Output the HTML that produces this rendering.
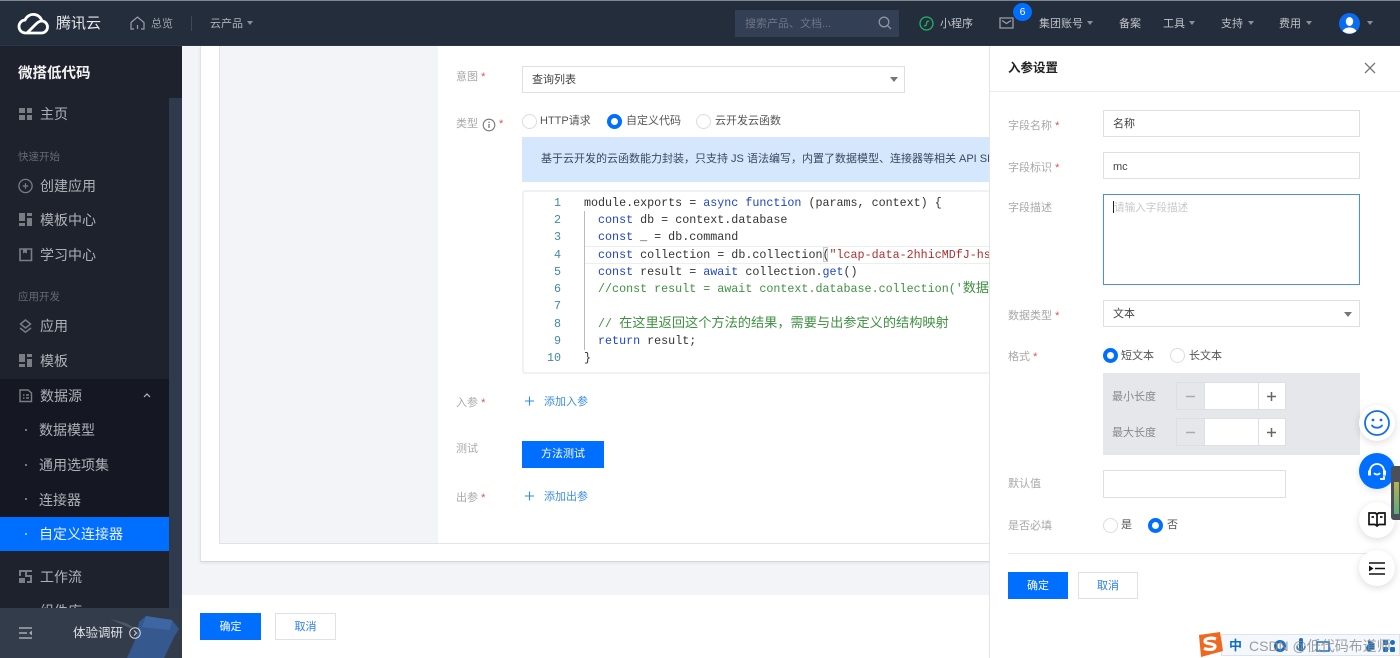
<!DOCTYPE html>
<html lang="zh"><head><meta charset="utf-8"><title>微搭低代码</title>
<style>
html,body{margin:0;padding:0;width:1400px;height:658px;overflow:hidden;background:#fff}
body{position:relative;font-family:"Liberation Sans","Noto Sans CJK SC",sans-serif;font-size:12px;color:#444}
.a,.t,.b{position:absolute}
.t{white-space:nowrap;line-height:16px}
.b{box-sizing:border-box}
svg{position:absolute;overflow:visible}
.n{color:#c0c3c8;font-size:11px}
.m{color:#aeb1b6;font-size:14px;line-height:20px}
.g{color:#656a72;font-size:10.5px}
.l{color:#a8a8a8;font-size:11px}
.l i,.r{color:#e25050;font-style:normal}
.inp{border:1px solid #dcdfe3;background:#fff}
.rad{box-sizing:border-box;position:absolute;width:15px;height:15px;border-radius:50%;border:1px solid #dcdcdc;background:#fff}
.on{border:4px solid #006eff}
.code,.ln{font:11.7px/17.3px "Liberation Mono","Noto Sans CJK SC",monospace;white-space:pre;position:absolute}
.code{left:584px;color:#333}
.ln{width:40px;left:521px;text-align:right;color:#3f8a9e}
.row{position:absolute;left:584px;width:406px;height:17px;overflow:hidden}
.k{color:#1f45c8}.c{color:#3f9142}.s{color:#b03030}
.cj{font-size:13.2px;line-height:0}
.fab{position:absolute;left:1359px;width:36px;height:36px;border-radius:50%;background:#fff;box-shadow:0 2px 8px rgba(0,0,0,.14)}
</style></head><body>

<!-- main background -->
<div class="a" style="left:182px;top:46px;width:1218px;height:549px;background:#f3f4f7"></div>
<div class="a" style="left:182px;top:595px;width:810px;height:63px;background:#fff"></div>
<!-- card -->
<div class="b" style="left:200px;top:46px;width:795px;height:516px;background:#fff;border-left:1px solid #dfe1e5;border-bottom:1px solid #d4d6da;box-shadow:0 1px 3px rgba(0,0,0,.08)"></div>
<div class="b" style="left:219px;top:46px;width:219px;height:498px;background:#f3f4f7;border-left:1px solid #dfe1e5;border-bottom:1px solid #dfe1e5"></div>
<div class="a" style="left:438px;top:543px;width:552px;height:1px;background:#e5e6e9"></div>

<!-- form -->
<div class="t l" style="left:456px;top:69px">意图 <i>*</i></div>
<div class="b inp" style="left:522px;top:66px;width:383px;height:27px"></div>
<div class="t" style="left:532px;top:72px;font-size:11px;color:#444">查询列表</div>
<div class="a" style="left:890px;top:77px;border:4px solid transparent;border-top:5px solid #777"></div>

<div class="t l" style="left:456px;top:116px">类型</div>
<svg style="left:482px;top:118px" width="14" height="14" viewBox="0 0 14 14"><circle cx="7" cy="7" r="5.8" fill="none" stroke="#777" stroke-width="1.1"/><path d="M7 6v4M7 3.8v1.2" stroke="#777" stroke-width="1.3"/></svg>
<div class="t r" style="left:499px;top:116px;font-size:11px">*</div>
<div class="rad" style="left:522px;top:114px"></div>
<div class="t" style="left:540px;top:113px;font-size:11px;color:#555">HTTP请求</div>
<div class="rad on" style="left:607px;top:114px"></div>
<div class="t" style="left:626px;top:113px;font-size:11px;color:#555">自定义代码</div>
<div class="rad" style="left:696px;top:114px"></div>
<div class="t" style="left:715px;top:113px;font-size:11px;color:#555">云开发云函数</div>

<div class="a" style="left:522px;top:137px;width:468px;height:45px;background:#d5e7fd"></div>
<div class="a" style="left:541px;top:151px;width:449px;height:16px;overflow:hidden;white-space:nowrap;font-size:11px;line-height:16px;color:#3a4a5e">基于云开发的云函数能力封装，只支持 JS 语法编写，内置了数据模型、连接器等相关 API SDK</div>

<div class="b" style="left:522px;top:190px;width:468px;height:184px;background:#fff;border:2px solid #f0f1f3;border-right:0;border-radius:3px"></div>
<div class="a" style="left:584px;top:246px;width:406px;height:16px;border-top:1px solid #eee;border-bottom:1px solid #eee"></div>
<div class="a" style="left:584px;top:211px;width:1px;height:139px;background:#bbb"></div>
<div class="a" style="left:823px;top:247px;width:5px;height:15px;border:1px solid #ccc;box-sizing:border-box;background:#f5f5f5"></div>
<div class="ln" style="top:194.700px">1
2
3
4
5
6
7
8
9
10</div>
<div class="code" style="top:194.700px;width:406px;overflow:hidden">module.exports = <span class="k">async</span> <span class="k">function</span> (params, context) {
  <span class="k">const</span> db = context.database
  <span class="k">const</span> _ = db.command
  <span class="k">const</span> collection = db.collection(<span class="s">"lcap-data-2hhicMDfJ-hs</span>
  <span class="k">const</span> result = <span class="k">await</span> collection.<span class="k">get</span>()
  <span class="c">//const result = await context.database.collection('<span class="cj">数据</span></span>

  <span class="c">// <span class="cj">在这里返回这个方法的结果，需要与出参定义的结构映射</span></span>
  <span class="k">return</span> result;
}</div>

<div class="t l" style="left:456px;top:395px">入参 <i>*</i></div>
<svg style="left:525px;top:396px" width="10" height="10" viewBox="0 0 10 10"><path d="M0 5h9M4.500 .5v9" stroke="#2b8fe6" stroke-width="1.100"/></svg>
<div class="t" style="left:544px;top:394px;font-size:11px;color:#3d8de0">添加入参</div>
<div class="t l" style="left:456px;top:441px">测试</div>
<div class="a" style="left:522px;top:441px;width:82px;height:27px;background:#006eff;color:#fff;font-size:11px;line-height:27px;text-align:center">方法测试</div>
<div class="t l" style="left:456px;top:490px">出参 <i>*</i></div>
<svg style="left:525px;top:491px" width="10" height="10" viewBox="0 0 10 10"><path d="M0 5h9M4.500 .5v9" stroke="#2b8fe6" stroke-width="1.100"/></svg>
<div class="t" style="left:544px;top:489px;font-size:11px;color:#3d8de0">添加出参</div>

<!-- footer -->
<div class="a" style="left:200px;top:613px;width:61px;height:27px;background:#006eff;color:#fff;font-size:11px;line-height:29px;text-align:center">确定</div>
<div class="b" style="left:275px;top:613px;width:61px;height:27px;background:#fff;border:1px solid #dfe1e4;color:#2f7de8;font-size:11px;line-height:27px;text-align:center">取消</div>

<!-- drawer -->
<div class="b" style="left:989px;top:46px;width:411px;height:612px;background:#fff;border-left:1px solid #e4e5e8"></div>
<div class="a" style="left:990px;top:91px;width:410px;height:1px;background:#eceded"></div>
<div class="t" style="left:1008px;top:60px;font-size:12.5px;font-weight:700;color:#222">入参设置</div>
<svg style="left:1364px;top:62px" width="12" height="12" viewBox="0 0 12 12"><path d="M1 1l10 10M11 1L1 11" stroke="#777" stroke-width="1.3"/></svg>

<div class="t l" style="left:1008px;top:118px">字段名称 <i>*</i></div>
<div class="b inp" style="left:1103px;top:110px;width:257px;height:27px"></div>
<div class="t" style="left:1113px;top:116px;font-size:11px">名称</div>
<div class="t l" style="left:1008px;top:160px">字段标识 <i>*</i></div>
<div class="b inp" style="left:1103px;top:152px;width:257px;height:27px"></div>
<div class="t" style="left:1113px;top:159px;font-size:11px">mc</div>
<div class="t l" style="left:1008px;top:200px">字段描述</div>
<div class="b" style="left:1103px;top:194px;width:257px;height:91px;border:1px solid #4a90dd;background:#fff"></div>
<div class="a" style="left:1113px;top:201px;width:1px;height:12px;background:#222"></div>
<div class="t" style="left:1114px;top:200px;font-size:10.6px;color:#c8c8c8">请输入字段描述</div>
<div class="t l" style="left:1008px;top:308px">数据类型 <i>*</i></div>
<div class="b inp" style="left:1103px;top:300px;width:257px;height:27px"></div>
<div class="t" style="left:1113px;top:306px;font-size:11px">文本</div>
<div class="a" style="left:1344px;top:312px;border:4px solid transparent;border-top:5px solid #777"></div>
<div class="t l" style="left:1008px;top:349px">格式 <i>*</i></div>
<div class="rad on" style="left:1103px;top:348px"></div>
<div class="t" style="left:1121px;top:348px;font-size:11px;color:#555">短文本</div>
<div class="rad" style="left:1170px;top:348px"></div>
<div class="t" style="left:1189px;top:348px;font-size:11px;color:#555">长文本</div>

<div class="a" style="left:1103px;top:373px;width:257px;height:82px;background:#e5e7eb"></div>
<div class="t" style="left:1112px;top:389px;font-size:11px;color:#888">最小长度</div>
<div class="t" style="left:1112px;top:425px;font-size:11px;color:#888">最大长度</div>
<div class="b" style="left:1176px;top:382px;width:110px;height:28px;border:1px solid #dcdfe3;background:#fff"></div>
<div class="a" style="left:1177px;top:383px;width:27px;height:26px;background:#e5e7eb;border-right:1px solid #dcdfe3"></div>
<svg style="left:1185px;top:391px" width="11" height="11" viewBox="0 0 11 11"><path d="M1 5.500h9" stroke="#aaa" stroke-width="1.500"/></svg>
<div class="a" style="left:1258px;top:383px;width:27px;height:26px;border-left:1px solid #dcdfe3"></div>
<svg style="left:1266px;top:391px" width="11" height="11" viewBox="0 0 11 11"><path d="M1 5.500h9M5.500 1v9" stroke="#666" stroke-width="1.500"/></svg>
<div class="b" style="left:1176px;top:418px;width:110px;height:28px;border:1px solid #dcdfe3;background:#fff"></div>
<div class="a" style="left:1177px;top:419px;width:27px;height:26px;background:#e5e7eb;border-right:1px solid #dcdfe3"></div>
<svg style="left:1185px;top:427px" width="11" height="11" viewBox="0 0 11 11"><path d="M1 5.500h9" stroke="#aaa" stroke-width="1.500"/></svg>
<div class="a" style="left:1258px;top:419px;width:27px;height:26px;border-left:1px solid #dcdfe3"></div>
<svg style="left:1266px;top:427px" width="11" height="11" viewBox="0 0 11 11"><path d="M1 5.500h9M5.500 1v9" stroke="#666" stroke-width="1.500"/></svg>

<div class="t l" style="left:1008px;top:476px">默认值</div>
<div class="b inp" style="left:1103px;top:470px;width:183px;height:28px"></div>
<div class="t l" style="left:1008px;top:518px">是否必填</div>
<div class="rad" style="left:1103px;top:518px"></div>
<div class="t" style="left:1121px;top:517px;font-size:11px;color:#555">是</div>
<div class="rad on" style="left:1148px;top:518px"></div>
<div class="t" style="left:1167px;top:517px;font-size:11px;color:#555">否</div>
<div class="a" style="left:1008px;top:553px;width:370px;height:1px;background:#e9eaec"></div>
<div class="a" style="left:1008px;top:572px;width:60px;height:27px;background:#006eff;color:#fff;font-size:11px;line-height:29px;text-align:center">确定</div>
<div class="b" style="left:1078px;top:572px;width:60px;height:27px;background:#fff;border:1px solid #dfe1e4;color:#2f7de8;font-size:11px;line-height:27px;text-align:center">取消</div>

<!-- sidebar -->
<div class="a" style="left:0;top:46px;width:182px;height:612px;background:#1e222d"></div>
<div class="a" style="left:169px;top:98px;width:13px;height:510px;background:#2f3b4d"></div>
<div class="a" style="left:0;top:379px;width:169px;height:172px;background:#151823"></div>
<div class="t" style="left:18px;top:64px;font-size:14.5px;line-height:20px;font-weight:700;color:#f2f2f2">微搭低代码</div>

<svg style="left:19px;top:107px" width="14" height="14" viewBox="0 0 14 14" fill="#7a7d83"><path d="M0 1h6v5H0zM8 1h5v5H8zM0 8h6v5H0zM8 8h5v5H8z"/></svg>
<div class="t m" style="left:40px;top:104px">主页</div>
<div class="t g" style="left:18px;top:149px">快速开始</div>
<svg style="left:18px;top:178px" width="16" height="16" viewBox="0 0 16 16" fill="none" stroke="#7a7d83" stroke-width="1.3"><circle cx="7.5" cy="8" r="6.6"/><path d="M4.8 8h5.4M7.5 5.3v5.4"/></svg>
<div class="t m" style="left:40px;top:176px">创建应用</div>
<svg style="left:19px;top:213px" width="14" height="14" viewBox="0 0 14 14" fill="#7a7d83"><path d="M0 0h6v8H0zM8 0h5v3H8zM8 5h5v8H8zM0 10h6v3H0z"/></svg>
<div class="t m" style="left:40px;top:210px">模板中心</div>
<svg style="left:19px;top:248px" width="14" height="14" viewBox="0 0 14 14" fill="none" stroke="#7a7d83" stroke-width="1.6"><path d="M1 1h11.500v11.500H1z"/><path d="M4 1h4v4.500L6 4.500 4 5.500z" fill="#7a7d83" stroke="none"/></svg>
<div class="t m" style="left:40px;top:245px">学习中心</div>
<div class="t g" style="left:18px;top:289px">应用开发</div>
<svg style="left:18px;top:318px" width="16" height="16" viewBox="0 0 16 16" fill="none" stroke="#7a7d83" stroke-width="1.5"><path d="M7.500 2l5 4-5 4-5-4zM2 10l5.500 4.200L13 10"/></svg>
<div class="t m" style="left:40px;top:316px">应用</div>
<svg style="left:19px;top:354px" width="14" height="14" viewBox="0 0 14 14" fill="#7a7d83"><path d="M0 0h6v8H0zM8 0h5v3H8zM8 5h5v8H8zM0 10h6v3H0z"/></svg>
<div class="t m" style="left:40px;top:351px">模板</div>
<svg style="left:19px;top:389px" width="14" height="14" viewBox="0 0 14 14" fill="none" stroke="#7a7d83" stroke-width="1.4"><path d="M1 1h8l3.500 3v8.500H1zM4 6h1.500M7 6h3M4 9h1.500M7 9h3"/></svg>
<div class="t m" style="left:40px;top:386px">数据源</div>
<svg style="left:143px;top:393px" width="8" height="5" viewBox="0 0 8 5"><path d="M1 4l3-3 3 3" stroke="#bbb" fill="none" stroke-width="1.2"/></svg>
<div class="a" style="left:25px;top:429px;width:2px;height:2px;background:#777"></div>
<div class="t m" style="left:39px;top:420px">数据模型</div>
<div class="a" style="left:25px;top:464px;width:2px;height:2px;background:#777"></div>
<div class="t m" style="left:39px;top:455px">通用选项集</div>
<div class="a" style="left:25px;top:498px;width:2px;height:2px;background:#777"></div>
<div class="t m" style="left:39px;top:490px">连接器</div>
<div class="a" style="left:0;top:517px;width:169px;height:34px;background:#006eff"></div>
<div class="a" style="left:25px;top:533px;width:2px;height:2px;background:#8dbbff"></div>
<div class="t" style="left:39px;top:524px;font-size:14px;line-height:20px;color:#e8f1ff">自定义连接器</div>
<svg style="left:19px;top:570px" width="14" height="14" viewBox="0 0 14 14" fill="#7a7d83"><path d="M0 0h13v2H8v3h5v8H8v-2h3V7H6V2H2v4H0zM0 8h6v5H0z"/></svg>
<div class="t m" style="left:40px;top:567px">工作流</div>
<div class="t m" style="left:40px;top:601px">组件库</div>

<div class="a" style="left:0;top:608px;width:182px;height:50px;background:#323c4b"></div>
<svg style="left:19px;top:627px" width="14" height="13" viewBox="0 0 14 13"><path d="M0 1h13M0 6h8M0 11h13" stroke="#a5a9af" stroke-width="1.500"/><path d="M13 3.500v5L10 6z" fill="#a5a9af"/></svg>
<svg style="left:110px;top:615px" width="72" height="43" viewBox="0 0 72 43"><path d="M0 4l16 4 7 4-3 1z" fill="#4e5763"/><path d="M36 1l26 4 7 9-5 8-10 21H17l9-20 3-16z" fill="#35598f"/><path d="M36 1l26 4-2 10-28-3z" fill="#3d66a3"/></svg>
<div class="t" style="left:73px;top:624px;font-size:12.500px;line-height:18px;color:#e0e3e7">体验调研</div>
<svg style="left:129px;top:627px" width="12" height="12" viewBox="0 0 12 12" fill="none" stroke="#d5d8dc"><circle cx="6" cy="6" r="5.300"/><path d="M5 3.500L7.500 6 5 8.500"/></svg>

<!-- header -->
<div class="a" style="left:0;top:0;width:1400px;height:46px;background:#242d3c;border-top:1px solid #7d8590;box-sizing:border-box;border-bottom:1px solid #2c3647"></div>
<svg style="left:18px;top:12px" width="31" height="23" viewBox="0 0 31 23" fill="none" stroke="#fff" stroke-width="2.800"><path d="M8 21h15a6 6 0 0 0 1-12 9 9 0 0 0-17-1 6.500 6.500 0 0 0 1 13z"/><path d="M9 21l9-9c2-2 4-3 6-3"/></svg>
<div class="t" style="left:56px;top:13px;font-size:15px;line-height:22px;color:#e6e8ea">腾讯云</div>
<svg style="left:130px;top:16px" width="15" height="14" viewBox="0 0 15 14" fill="none" stroke="#9a9fa7" stroke-width="1.200"><path d="M1 6.500L7.500 1 14 6.500V13h-3M1 6.500V13h3M7.500 9v4"/></svg>
<div class="t n" style="left:151px;top:16px;color:#9fa4ab">总览</div>
<div class="a" style="left:191px;top:16px;width:1px;height:15px;background:#3f4855"></div>
<div class="t n" style="left:210px;top:16px;color:#aeb3ba">云产品</div>
<div class="a" style="left:247px;top:21px;border:3.500px solid transparent;border-top:4px solid #8a8f97"></div>

<div class="a" style="left:735px;top:10px;width:164px;height:27px;background:#333f55"></div>
<div class="t" style="left:745px;top:16px;font-size:11px;color:#6d7684">搜索产品、文档...</div>
<svg style="left:878px;top:16px" width="14" height="14" viewBox="0 0 14 14" fill="none" stroke="#8d94a0" stroke-width="1.300"><circle cx="6" cy="6" r="4.800"/><path d="M9.500 9.500l3.500 3.500"/></svg>
<svg style="left:919px;top:16px" width="15" height="15" viewBox="0 0 15 15" fill="none" stroke="#21b567" stroke-width="1.300"><circle cx="7.500" cy="7.500" r="6.500"/><path d="M5 9.500c1.500 1 2.500-.5 2.500-2s1-3 2.500-2"/></svg>
<div class="t n" style="left:940px;top:16px">小程序</div>
<svg style="left:999px;top:17px" width="15" height="12" viewBox="0 0 15 12" fill="none" stroke="#9a9fa7" stroke-width="1.300"><path d="M1 1h13v10H1zM3 3.500l4.500 3 4.500-3"/></svg>
<div class="a" style="left:1013px;top:3px;width:19px;height:18px;border-radius:50%;background:#006eff;color:#fff;font-size:10.500px;line-height:18px;text-align:center">6</div>
<div class="t n" style="left:1039px;top:16px">集团账号</div>
<div class="a" style="left:1087px;top:21px;border:3.500px solid transparent;border-top:4px solid #8a8f97"></div>
<div class="t n" style="left:1119px;top:16px">备案</div>
<div class="t n" style="left:1163px;top:16px">工具</div>
<div class="a" style="left:1189px;top:21px;border:3.500px solid transparent;border-top:4px solid #8a8f97"></div>
<div class="t n" style="left:1221px;top:16px">支持</div>
<div class="a" style="left:1248px;top:21px;border:3.500px solid transparent;border-top:4px solid #8a8f97"></div>
<div class="t n" style="left:1279px;top:16px">费用</div>
<div class="a" style="left:1306px;top:21px;border:3.500px solid transparent;border-top:4px solid #8a8f97"></div>
<svg style="left:1339px;top:13px" width="21" height="21" viewBox="0 0 21 21"><circle cx="10.500" cy="10.500" r="10.500" fill="#0a6cf0"/><ellipse cx="10.500" cy="8.500" rx="3.700" ry="4.500" fill="#fff"/><path d="M3.500 18c2-3 4.500-3.500 7-3.500s5 .5 7 3.500a10.500 10.500 0 0 1-14 0z" fill="#fff"/></svg>
<div class="a" style="left:1367px;top:21px;border:3.500px solid transparent;border-top:4px solid #8a8f97"></div>

<!-- floating buttons -->
<div class="fab" style="top:405px"><svg style="left:5px;top:5px" width="26" height="26" viewBox="0 0 26 26" fill="none" stroke="#1470e8" stroke-width="1.800"><circle cx="13" cy="13" r="12"/><path d="M8 15.500c2.500 3 7.500 3 10 0" stroke-linecap="round"/><circle cx="9" cy="10" r="1.400" fill="#1470e8" stroke="none"/><circle cx="17" cy="10" r="1.400" fill="#1470e8" stroke="none"/></svg></div>
<div class="fab" style="top:453px;background:#006eff;box-shadow:0 2px 8px rgba(0,0,0,.12)"><svg style="left:8px;top:8px" width="20" height="20" viewBox="0 0 20 20" fill="none" stroke="#fff" stroke-width="1.800"><path d="M3 10a7 7 0 0 1 14 0"/><rect x="1" y="9.500" width="3" height="5" fill="#fff" stroke="none"/><rect x="16" y="9.500" width="3" height="5" fill="#fff" stroke="none"/><path d="M7 12c1.500 2 4.500 2 6 0M13 18h4v-3"/></svg></div>
<div class="fab" style="top:502px"><svg style="left:9px;top:10px" width="18" height="16" viewBox="0 0 18 16" fill="none" stroke="#111" stroke-width="1.700"><path d="M1 1h6.500L9 2.500 10.500 1H17v11.500h-6L9 14l-2-1.500H1zM9 2.500V14M3.500 5h2.500M12 5h2.500"/></svg></div>
<div class="fab" style="top:550px"><svg style="left:10px;top:12px" width="16" height="13" viewBox="0 0 16 13"><path d="M0 1h16M6 6.500h10M0 12h16" stroke="#111" stroke-width="1.600"/><path d="M0 3.500v6L4.500 6.500z" fill="#111"/></svg></div>
<div class="a" style="left:1391px;top:466px;width:9px;height:54px;background:#4a5058;border-radius:3px 0 0 3px"></div>
<div class="a" style="left:1394px;top:482px;width:5px;height:32px;background:linear-gradient(#b9b04c,#5bab7e)"></div>

<!-- IME bar + watermark -->
<div class="b" style="left:1221px;top:634px;width:179px;height:22px;background:#f4f7fb;border:1px solid #dde3ea"></div>
<svg style="left:1195px;top:632px" width="28" height="25" viewBox="0 0 28 25"><path d="M4 3L25 0l3 19-22 6z" fill="#ef6820"/><path d="M21 7c-4-1.500-11-1-11 2.200s10 1.800 10 5.300-7 3.500-11 1.800" fill="none" stroke="#fff" stroke-width="3.200"/></svg>
<div class="t" style="left:1229px;top:638px;font-size:13px;font-weight:700;color:#0f6ec4">中</div>
<svg style="left:1268px;top:637px" width="132" height="18" viewBox="0 0 132 18"><circle cx="12" cy="9" r="6" fill="#1c6fc0"/><circle cx="12" cy="9" r="3" fill="#f4f7fb"/><path d="M33 3v8" stroke="#1c6fc0" stroke-width="4" stroke-linecap="round"/><path d="M29 9c0 6 8 6 8 0" stroke="#1c6fc0" fill="none" stroke-width="1.500"/><rect x="49" y="5" width="12" height="9" fill="none" stroke="#1c6fc0" stroke-width="1.500"/><path d="M100 3l6 3v6l-6 3-2-4 2-4z" fill="#1c6fc0"/><rect x="115" y="3" width="5" height="5" rx="1" fill="#1c6fc0"/><rect x="122" y="3" width="5" height="5" rx="2.500" fill="#1c6fc0"/><rect x="115" y="10" width="5" height="5" rx="1" fill="#1c6fc0"/><rect x="122" y="10" width="5" height="5" rx="1" fill="#1c6fc0"/></svg>
<div class="t" style="left:1249px;top:637px;font-size:14px;line-height:18px;color:#8b8e92;opacity:.85">CSDN @低代码布道师</div>

</body></html>
